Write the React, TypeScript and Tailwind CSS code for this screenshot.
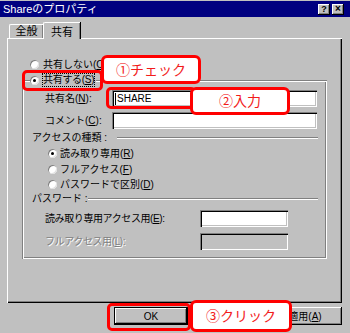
import React from 'react';

const sunken =
  'shadow-[inset_1px_1px_0_#808080,inset_2px_2px_0_#000,inset_-1px_-1px_0_#fff,inset_-2px_-2px_0_#c0c0c0]';
const raised =
  'shadow-[inset_-1px_-1px_0_#000,inset_1px_1px_0_#fff,inset_-2px_-2px_0_#808080]';

const Radio = ({ checked = false }: { checked?: boolean }) => (
  <span className="relative w-[9px] h-[9px] rounded-full bg-white shadow-[inset_1px_1px_0_#808080,inset_-1px_-1px_0_#e0e0e0] shrink-0 flex items-center justify-center">
    {checked && <span className="w-[3px] h-[3px] rounded-full bg-black" />}
  </span>
);

const Separator = ({ label, width, line }: { label: string; width: string; line: string }) => (
  <div className="mt-[3px] h-[12px] flex items-center pl-[10px]">
    <span className={`${width} leading-[12px] whitespace-nowrap`}>{label}</span>
    <div className={`${line} h-0 border-t border-b border-t-[#808080] border-b-white`} />
  </div>
);

const Callout = ({ text, className }: { text: string; className: string }) => (
  <div
    className={`absolute bg-white border-[3px] border-[#ff0000] rounded-[6px] flex items-center justify-center text-[#f21b1b] text-[14px] leading-none ${className}`}
  >
    {text}
  </div>
);

const Highlight = ({ className }: { className: string }) => (
  <div className={`absolute border-[3px] border-[#ff0000] rounded-[5px] ${className}`} />
);

export default function App() {
  return (
    <div className="relative w-[350px] h-[333px] bg-[#c0c0c0] overflow-hidden text-[10px] text-black whitespace-nowrap font-['Liberation_Sans','Noto_Sans_CJK_JP',sans-serif]">
      {/* title bar */}
      <div className="mt-[1px] h-[16px] bg-[#000080] flex items-center justify-between pl-[3px] pr-[6px]">
        <span className="text-white text-[11px] leading-none">Shareのプロパティ</span>
        <div className="flex gap-[2px]">
          <div className={`w-[12px] h-[11px] bg-[#c0c0c0] ${raised} flex items-center justify-center text-[9px] font-bold leading-none`}>?</div>
          <div className={`w-[12px] h-[11px] bg-[#c0c0c0] ${raised} flex items-center justify-center text-[10px] font-bold leading-none`}>×</div>
        </div>
      </div>

      {/* tabs */}
      <div className="mt-[5px] h-[16px] ml-[9px] flex items-end text-[11px]">
        <div className="w-[34px] h-[14px] flex items-center justify-center border-t border-l border-white shadow-[inset_-1px_0_0_#808080] rounded-tl-[2px]">
          全般
        </div>
        <div className="relative z-10 w-[37px] h-[17px] -mb-[1px] bg-[#c0c0c0] flex items-start pt-[1px] justify-center border-t border-l border-white shadow-[inset_-1px_0_0_#808080,1px_0_0_#000] rounded-tl-[2px]">
          共有
        </div>
      </div>

      {/* tab panel */}
      <div className="ml-[7px] w-[335px] h-[265px] shadow-[inset_1px_1px_0_#fff,inset_-1px_-1px_0_#000,inset_-2px_-2px_0_#808080] flex flex-col">
        <div className="mt-[20px] h-[12px] flex items-center pl-[23px] gap-[4px]">
          <Radio />
          <span>共有しない(<u>O</u>)</span>
        </div>

        {/* group box */}
        <div className="mt-[10px] ml-[15px] w-[305px] h-[179px] shadow-[inset_1px_1px_0_#808080,inset_2px_2px_0_#fff,inset_-1px_-1px_0_#fff,inset_-2px_-2px_0_#808080] flex flex-col">
          <div className="-mt-[6px] ml-[8px] h-[12px] self-start bg-[#c0c0c0] pr-[2px] flex items-center gap-[4px]">
            <Radio checked />
            <span className="leading-[12px] tracking-[-0.3px] outline outline-1 outline-dotted outline-black">共有する(<u>S</u>)</span>
          </div>

          <div className="mt-[4px] h-[17px] flex items-center pl-[23px]">
            <span className="w-[67px]">共有名(<u>N</u>):</span>
            <div className={`w-[205px] h-[17px] bg-white ${sunken} flex items-center pl-[3px]`}>
              <span className="w-px h-[12px] bg-black mr-[1px]" />
              <span className="text-[10px]">SHARE</span>
            </div>
          </div>

          <div className="mt-[5px] h-[17px] flex items-center pl-[23px]">
            <span className="w-[67px]">コメント(<u>C</u>):</span>
            <div className={`w-[205px] h-[17px] bg-white ${sunken}`} />
          </div>

          <Separator label="アクセスの種類 :" width="w-[85px]" line="w-[201px]" />

          <div className="mt-[3px] h-[12px] flex items-center pl-[26px] gap-[3px]">
            <Radio checked />
            <span>読み取り専用(<u>R</u>)</span>
          </div>
          <div className="mt-[4px] h-[12px] flex items-center pl-[26px] gap-[3px]">
            <Radio />
            <span>フルアクセス(<u>F</u>)</span>
          </div>
          <div className="mt-[3px] h-[12px] flex items-center pl-[26px] gap-[3px]">
            <Radio />
            <span>パスワードで区別(<u>D</u>)</span>
          </div>

          <Separator label="パスワード :" width="w-[56px]" line="w-[230px]" />

          <div className="mt-[5px] h-[17px] flex items-center pl-[23px]">
            <span className="w-[155px] tracking-[-0.4px]">読み取り専用アクセス用(<u>E</u>):</span>
            <div className={`w-[88px] h-[17px] bg-white ${sunken}`} />
          </div>
          <div className="mt-[6px] h-[17px] flex items-center pl-[23px]">
            <span className="w-[155px] tracking-[-0.4px] text-[#808080] [text-shadow:1px_1px_0_#fff]">フルアクセス用(<u>L</u>):</span>
            <div className={`w-[88px] h-[17px] bg-[#c0c0c0] ${sunken}`} />
          </div>
        </div>
      </div>

      {/* dialog buttons */}
      <div className="mt-[4px] h-[18px] flex justify-end gap-[3px] pr-[8px]">
        <div className={`w-[74px] h-[18px] border border-black ${raised} flex items-center justify-center`}>OK</div>
        <div className={`w-[74px] h-[18px] ${raised}`} />
        <div className={`w-[74px] h-[18px] ${raised} flex items-center justify-center`}>適用(<u>A</u>)</div>
      </div>

      {/* annotations */}
      <Highlight className="left-[22px] top-[70px] w-[81px] h-[21px]" />
      <Callout text="①チェック" className="left-[101px] top-[55px] w-[100px] h-[29px]" />
      <Highlight className="left-[106px] top-[87px] w-[90px] h-[22px]" />
      <Callout text="②入力" className="left-[190px] top-[87px] w-[100px] h-[28px]" />
      <Highlight className="left-[107px] top-[303px] w-[84px] h-[28px]" />
      <Callout text="③クリック" className="left-[190px] top-[300px] w-[102px] h-[32px]" />
    </div>
  );
}
